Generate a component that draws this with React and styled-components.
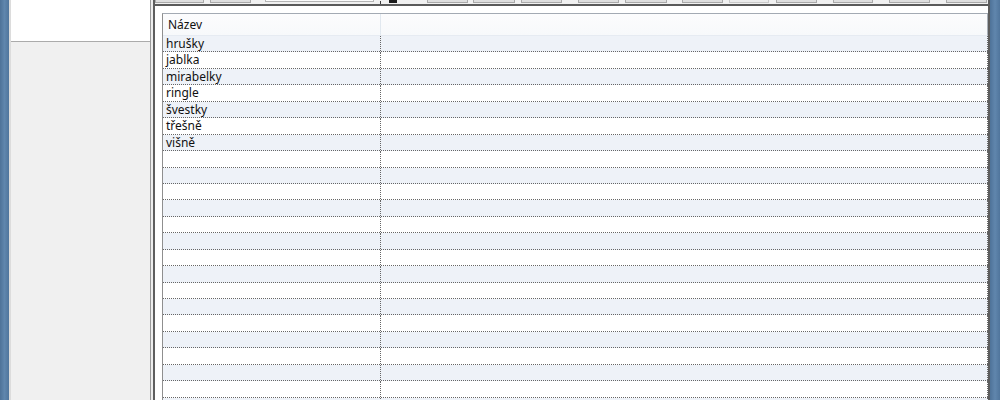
import React from "react";
import styled, { createGlobalStyle } from "styled-components";

const Global = createGlobalStyle`
  html, body { margin: 0; padding: 0; background: #f0f0f0; }
  body { width: 1000px; height: 400px; overflow: hidden; font-family: "Noto Sans", "Open Sans", sans-serif; }
  #root { width: 1000px; height: 400px; }
`;

const Window = styled.div`
  display: flex;
  width: 1000px;
  height: 400px;
  overflow: hidden;
`;

const Frame = styled.div`
  width: ${(p) => p.$w}px;
  flex: none;
  background: linear-gradient(90deg, #4e7298 0%, #6086ad 50%, #50759c 100%);
`;

const LeftPane = styled.div`
  width: 139px;
  flex: none;
  display: flex;
  flex-direction: column;
  background: #f0f0f0;
  border-left: 2px solid #dcdcdc;
  border-right: 1px solid #9a9a9a;
`;

const LeftBox = styled.div`
  height: 41px;
  background: #ffffff;
  border-bottom: 1px solid #ababab;
`;

const Splitter = styled.div`
  width: 2px;
  flex: none;
  background: #ededed;
`;

const Main = styled.div`
  flex: 1;
  display: flex;
  flex-direction: column;
  border-left: 2px solid #5e5e5e;
  border-right: 2px solid #5e5e5e;
  background: #ffffff;
  min-width: 0;
`;

const Toolbar = styled.div`
  height: 4px;
  flex: none;
  display: flex;
  align-items: flex-end;
  overflow: hidden;
  background: #f0f0f0;
  border-bottom: 2px solid #5a5a5a;
`;

const ToolButton = styled.div`
  flex: none;
  width: ${(p) => p.$w}px;
  margin-left: ${(p) => p.$ml}px;
  height: 22px;
  margin-bottom: 1px;
  box-sizing: border-box;
  background: ${(p) => (p.$light ? "#ececec" : "#dedede")};
  border: 1px solid ${(p) => (p.$light ? "#c9c9c9" : "#a9a9a9")};
`;

const TextBox = styled.div`
  flex: none;
  width: ${(p) => p.$w}px;
  margin-left: ${(p) => p.$ml}px;
  height: 22px;
  margin-bottom: 2px;
  box-sizing: border-box;
  background: #fbfbfb;
  border: 1px solid #b4b4b4;
`;

const ToolSep = styled.div`
  flex: none;
  width: 1px;
  height: 3px;
  margin-left: ${(p) => p.$ml}px;
  background: #3a3a3a;
`;

const ToolIcon = styled.div`
  flex: none;
  width: 8px;
  height: 3px;
  margin-left: ${(p) => p.$ml}px;
  margin-bottom: 1px;
  background: #1c1c1c;
`;

const Content = styled.div`
  flex: 1;
  padding: 7px 0 0 7px;
  min-height: 0;
`;

const Grid = styled.div`
  width: 825px;
  border-left: 1px solid #8f8f8f;
  border-top: 1px solid #a3aab3;
  font-size: 12px;
  color: #111111;
`;

const HeaderRow = styled.div`
  display: flex;
  height: 21px;
  background: linear-gradient(180deg, #fcfcfd 0%, #f7f9fb 100%);
  border-bottom: 1px solid #e6ebf2;
  border-right: 1px solid #a9b0b8;
`;

const HeaderCell = styled.div`
  width: ${(p) => p.$w}px;
  flex: ${(p) => (p.$w ? "none" : "1")};
  box-sizing: border-box;
  padding-left: 5px;
  line-height: 21px;
  border-right: ${(p) => (p.$w ? "1px solid #e1e8ef" : "none")};
`;

const Row = styled.div`
  display: flex;
  height: 16.45px;
  box-sizing: border-box;
  background: ${(p) => (p.$alt ? "#eef2f8" : "#ffffff")};
  border-bottom: 1px dotted #666666;
`;

const Cell = styled.div`
  width: ${(p) => p.$w}px;
  flex: ${(p) => (p.$w ? "none" : "1")};
  box-sizing: border-box;
  padding-left: 3px;
  line-height: 15px;
  white-space: nowrap;
  border-right: 1px dotted #666666;
`;

const buttons = [
  { t: "b", w: 49, ml: 0 },
  { t: "b", w: 41, ml: 6 },
  { t: "tb", w: 109, ml: 14 },
  { t: "sep", ml: 6 },
  { t: "icon", ml: 8 },
  { t: "b", w: 41, ml: 30 },
  { t: "b", w: 42, ml: 5 },
  { t: "b", w: 41, ml: 6 },
  { t: "b", w: 41, ml: 16 },
  { t: "b", w: 42, ml: 6 },
  { t: "b", w: 41, ml: 15 },
  { t: "b", w: 40, ml: 6, light: true },
  { t: "b", w: 41, ml: 7 },
  { t: "b", w: 40, ml: 16 },
  { t: "b", w: 41, ml: 16 },
  { t: "b", w: 41, ml: 16 },
];

const items = ["hrušky", "jablka", "mirabelky", "ringle", "švestky", "třešně", "višně"];

export default function App() {
  const rows = [];
  for (let i = 0; i < 24; i++) rows.push(items[i] || "");
  return (
    <>
      <Global />
      <Window>
        <Frame $w={9} />
        <LeftPane>
          <LeftBox />
        </LeftPane>
        <Splitter />
        <Main>
          <Toolbar>
            {buttons.map((b, i) => {
              if (b.t === "tb") return <TextBox key={i} $w={b.w} $ml={b.ml} />;
              if (b.t === "sep") return <ToolSep key={i} $ml={b.ml} />;
              if (b.t === "icon") return <ToolIcon key={i} $ml={b.ml} />;
              return <ToolButton key={i} $w={b.w} $ml={b.ml} $light={b.light} />;
            })}
          </Toolbar>
          <Content>
            <Grid>
              <HeaderRow>
                <HeaderCell $w={218}>Název</HeaderCell>
                <HeaderCell />
              </HeaderRow>
              {rows.map((name, i) => (
                <Row key={i} $alt={i % 2 === 0}>
                  <Cell $w={218}>{name}</Cell>
                  <Cell />
                </Row>
              ))}
            </Grid>
          </Content>
        </Main>
        <Frame $w={10} />
      </Window>
    </>
  );
}
